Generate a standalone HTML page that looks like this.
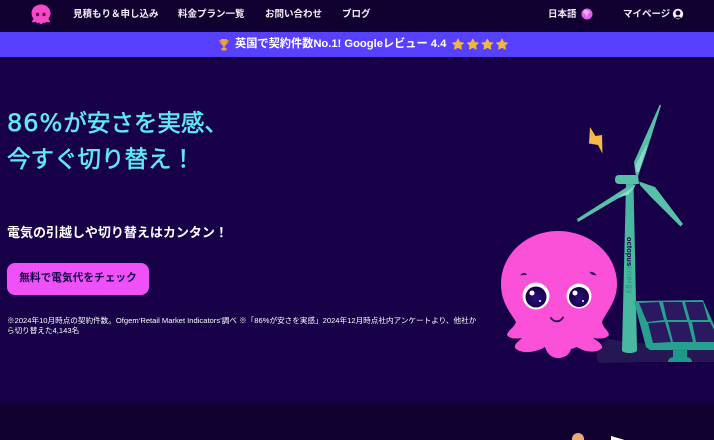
<!DOCTYPE html>
<html lang="ja"><head><meta charset="utf-8"><title>Octopus Energy</title>
<style>
html,body{margin:0;padding:0;width:714px;height:440px;overflow:hidden;background:#100030}
body{position:relative;font-family:"Liberation Sans","Noto Sans CJK JP",sans-serif;color:#fff}
.a{position:absolute;white-space:nowrap}
#nav{left:0;top:0;width:714px;height:32px;background:#100030}
#ban{left:0;top:32px;width:714px;height:25px;background:#5840ff}
#hero{left:0;top:57px;width:714px;height:346px;background:#180048}
.n{top:8px;font-size:9.5px;line-height:14px;font-weight:700;color:#f2eef8}
h1{margin:0;font-weight:400;font-size:23.5px;line-height:36px;color:#60e8f8;left:7px;top:105px;-webkit-text-stroke:.55px #60e8f8}
h1 span{font-family:"DejaVu Sans",sans-serif;font-size:24px;letter-spacing:1px}
#btn{left:7px;top:263px;width:142px;height:32px;border-radius:8px;background:#f050f8;color:#180048;font-size:10.7px;font-weight:700;line-height:30px;text-align:center}
#fn{left:7px;top:315.500px;width:472px;white-space:normal;font-size:7.6px;line-height:10.5px}
svg{position:absolute;left:0;top:0}
</style></head><body>
<div class="a" id="nav"></div>
<div class="a" id="ban"></div>
<div class="a" id="hero"></div>
<div class="a n" style="left:73px">見積もり＆申し込み</div>
<div class="a n" style="left:178px">料金プラン一覧</div>
<div class="a n" style="left:265px">お問い合わせ</div>
<div class="a n" style="left:342px">ブログ</div>
<div class="a n" style="left:548px">日本語</div>
<div class="a n" style="left:623px">マイページ</div>
<div class="a" style="left:235px;top:37px;font-size:11.2px;line-height:15px;font-weight:700">英国で契約件数No.1! Googleレビュー 4.4</div>
<h1 class="a"><span>86%</span>が安さを実感、<br>今すぐ切り替え！</h1>
<div class="a" style="left:7px;top:224px;font-size:13px;line-height:18px;font-weight:700">電気の引越しや切り替えはカンタン！</div>
<div class="a" id="btn">無料で電気代をチェック</div>
<div class="a" id="fn">※2024年10月時点の契約件数。Ofgem‘Retail Market Indicators’調べ ※「86%が安さを実感」2024年12月時点社内アンケートより、他社から切り替えた4,143名</div>
<svg width="714" height="440" viewBox="0 0 714 440">
<defs><radialGradient id="p" cx=".5" cy=".55" r=".55"><stop offset="0" stop-color="#2a1080"/><stop offset="1" stop-color="#140040"/></radialGradient></defs>
<!-- logo -->
<path d="M41 4.500C46.500 4.500 50.500 8.500 50.500 13C50.500 16 49 17.500 48.500 19C49 20.500 50.500 21 50 22C48.500 22.800 47 22 46 22C45.500 23.500 43.500 23 43 22.500C42.500 24.500 39.500 24.500 39 22.500C38.500 23 36.500 23.500 36 22C35 22 33.500 22.800 32 22C31.500 21 33 20.500 33.500 19C33 17.500 31.500 16 31.500 13C31.500 8.500 35.500 4.500 41 4.500Z" fill="#f848c8"/>
<circle cx="37.500" cy="14.500" r="1.700" fill="#501040"/><circle cx="44" cy="14.500" r="1.700" fill="#501040"/>
<!-- globe -->
<circle cx="587" cy="14" r="5.500" fill="#e060f0"/><path d="M585 9.500C587 10.500 589 10.500 590 11.500L588 14L587 17.500L585.500 14.500L583 12.500Z" fill="#f4a8f0"/>
<!-- user -->
<circle cx="678" cy="14" r="5.200" fill="#f4f0f8"/><circle cx="678" cy="13" r="2.400" fill="#100030"/><path d="M674.800 18.500C675.500 15.800 680.500 15.800 681.200 18.500Z" fill="#100030"/>
<!-- trophy -->
<path d="M221 39H227V42.500C227 44.500 225.500 45.500 224.800 45.700V48H226.500V50.500H221.500V48H223.200V45.700C222.500 45.500 221 44.500 221 42.500Z" fill="#e8a050"/><path d="M219 40H221V43.500H220ZM227 40H229L228 43.500H227Z" fill="#d88040"/>
<!-- stars -->
<g fill="#f0b840" stroke="#f0b840" stroke-width=".8" stroke-linejoin="round"><path d="M458 39L459.800 42.400L463.500 42.900L460.800 45.500L461.500 49.200L458 47.400L454.500 49.200L455.200 45.500L452.500 42.900L456.200 42.400Z"/>
<path transform="translate(14.800 0)" d="M458 39L459.800 42.400L463.500 42.900L460.800 45.500L461.500 49.200L458 47.400L454.500 49.200L455.200 45.500L452.500 42.900L456.200 42.400Z"/>
<path transform="translate(29.400 0)" d="M458 39L459.800 42.400L463.500 42.900L460.800 45.500L461.500 49.200L458 47.400L454.500 49.200L455.200 45.500L452.500 42.900L456.200 42.400Z"/>
<path transform="translate(44 0)" d="M458 39L459.800 42.400L463.500 42.900L460.800 45.500L461.500 49.200L458 47.400L454.500 49.200L455.200 45.500L452.500 42.900L456.200 42.400Z"/></g>
<!-- ground shadow -->
<path d="M608 339C640 345 690 347 714 346V362H640L600 363C592 358 600 345 608 339Z" fill="#261654"/>
<!-- bolt -->
<path d="M590 127L595.500 136L602 135L602.500 153.500L598 145L589 143.500Z" fill="#f8b848"/>
<!-- turbine -->
<path d="M626 184H633.500L637 350C637 354 622 354 622 350Z" fill="#48b8a0"/>
<path d="M659.800 104.500L661 105.500L646 153L638 176L635.500 174L634 162Z" fill="#58c0a8"/>
<path d="M635.500 165L648 142L639 172L636.500 172Z" fill="#88dccc"/>
<path d="M639 181.500L655 187L683 224L680.500 226.500L650 196L640 185Z" fill="#58c0a8"/>
<path d="M636 184L627 187L577 219L578 222L617 199L632 192Z" fill="#58c0a8"/>
<path d="M635 186L618 197L628 195Z" fill="#8cdccc"/>
<path d="M619 175H638L639 184H619C616 184 615 182 615 179.500C615 177 616 175 619 175Z" fill="#58c0a8"/>
<text transform="translate(627 237) rotate(90)" font-size="7.500" font-weight="700" fill="#180048">octopus</text>
<text transform="translate(627 266) rotate(90)" font-size="8" letter-spacing=".6" fill="#2f8a88">energy</text>
<!-- solar panel -->
<path d="M634 301L703 300L714 325V350L650 350L646 347Z" fill="#28a090"/>
<g fill="#2a1860"><path d="M639 303L659 302L664 320L647 322Z"/><path d="M663 302L682 302L687 320L667 320Z"/><path d="M685 302L703 302L708 320L690 320Z"/><path d="M648 323L665 322L671 342L653 343Z"/><path d="M668 322L688 322L693 342L673 342Z"/><path d="M692 322L710 322L714 330V342L696 342Z"/></g>
<path d="M673 349H687V357C690 358 692 359 692 362H668C668 359 670 358 673 357Z" fill="#1e9888"/>
<!-- octopus -->
<path d="M558 231C590 231 617 254 617 284C617 302 606 312 602 322C603 328 609 331 609 335C606 339 600 339 593 338C597 341 603 344 602 348C597 353 586 353 577 347C574 348 572 349 571 349C570 354 565 358 558 358C551 358 547 353 545 347C537 352 522 355 515 348C514 344 519 341 522 338C516 339 510 339 507 335C508 330 514 328 516 322C510 312 501 302 501 284C501 254 527 231 558 231Z" fill="#fb50d8"/>
<circle cx="536" cy="296" r="13.500" fill="#fff"/><circle cx="579" cy="296" r="12.500" fill="#fff"/>
<circle cx="536" cy="297" r="10.500" fill="url(#p)"/><circle cx="579" cy="297" r="10" fill="url(#p)"/>
<circle cx="532" cy="293" r="2.500" fill="#fff"/><circle cx="575" cy="293" r="2.500" fill="#fff"/>
<circle cx="540" cy="301" r="1" fill="#fff"/><circle cx="583" cy="301" r="1" fill="#fff"/>
<path d="M521 275C522 273 525 272.500 526.500 274.500Z" fill="#280848" stroke="#280848" stroke-width=".6"/><path d="M590 272C592 272 595 273 596 275C593 275 591 274.500 590 272Z" fill="#280848" stroke="#280848" stroke-width=".6"/>
<path d="M551 318C554 322.500 560 322.500 563 317.500" fill="none" stroke="#280848" stroke-width="1.800" stroke-linecap="round"/>
<!-- bottom -->
<circle cx="578" cy="439" r="6" fill="#f0a878"/>
<path d="M611 436L628 441H611Z" fill="#fff"/>
</svg>
</body></html>
